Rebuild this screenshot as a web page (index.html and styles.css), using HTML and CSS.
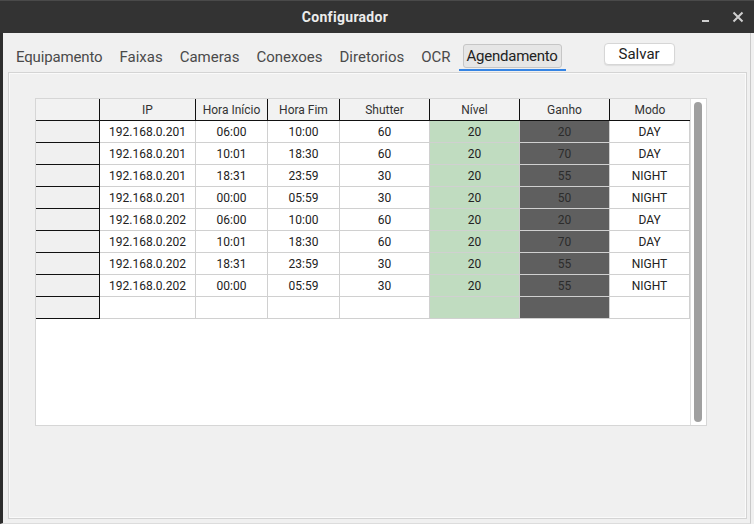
FILE: index.html
```html
<!DOCTYPE html>
<html lang="pt">
<head>
<meta charset="utf-8">
<title>Configurador</title>
<link rel="stylesheet" href="styles.css">
</head>
<body>
<div class="titlebar">
  <div class="title">Configurador</div>
  <div class="wbtns">
    <svg class="wicon" width="16" height="16" viewBox="0 0 16 16"><rect x="4" y="11" width="7" height="2" fill="#cfcfcf"/></svg>
    <svg class="wicon" width="16" height="16" viewBox="0 0 16 16"><path d="M3.5 3.5 L12.5 12.5 M12.5 3.5 L3.5 12.5" stroke="#cfcfcf" stroke-width="2" fill="none"/></svg>
  </div>
</div>
<div class="win">
  <div class="tabbar">
    <span class="tab first">Equipamento</span>
    <span class="tab">Faixas</span>
    <span class="tab">Cameras</span>
    <span class="tab">Conexoes</span>
    <span class="tab">Diretorios</span>
    <span class="tab ocr">OCR</span>
    <span class="tabsel"><span class="tabbox">Agendamento</span></span>
    <button class="btn">Salvar</button>
  </div>
  <div class="panel">
    <div class="frame">
      <div class="grid">
        <div class="h corner"></div><div class="h">IP</div><div class="h">Hora Início</div><div class="h">Hora Fim</div><div class="h">Shutter</div><div class="h">Nível</div><div class="h">Ganho</div><div class="h last">Modo</div>

        <div class="rh"></div><div class="c">192.168.0.201</div><div class="c">06:00</div><div class="c">10:00</div><div class="c">60</div><div class="c g">20</div><div class="c d">20</div><div class="c">DAY</div>
        <div class="rh"></div><div class="c">192.168.0.201</div><div class="c">10:01</div><div class="c">18:30</div><div class="c">60</div><div class="c g">20</div><div class="c d">70</div><div class="c">DAY</div>
        <div class="rh"></div><div class="c">192.168.0.201</div><div class="c">18:31</div><div class="c">23:59</div><div class="c">30</div><div class="c g">20</div><div class="c d">55</div><div class="c">NIGHT</div>
        <div class="rh"></div><div class="c">192.168.0.201</div><div class="c">00:00</div><div class="c">05:59</div><div class="c">30</div><div class="c g">20</div><div class="c d">50</div><div class="c">NIGHT</div>
        <div class="rh"></div><div class="c">192.168.0.202</div><div class="c">06:00</div><div class="c">10:00</div><div class="c">60</div><div class="c g">20</div><div class="c d">20</div><div class="c">DAY</div>
        <div class="rh"></div><div class="c">192.168.0.202</div><div class="c">10:01</div><div class="c">18:30</div><div class="c">60</div><div class="c g">20</div><div class="c d">70</div><div class="c">DAY</div>
        <div class="rh"></div><div class="c">192.168.0.202</div><div class="c">18:31</div><div class="c">23:59</div><div class="c">30</div><div class="c g">20</div><div class="c d">55</div><div class="c">NIGHT</div>
        <div class="rh"></div><div class="c">192.168.0.202</div><div class="c">00:00</div><div class="c">05:59</div><div class="c">30</div><div class="c g">20</div><div class="c d">55</div><div class="c">NIGHT</div>
        <div class="rh"></div><div class="c"></div><div class="c"></div><div class="c"></div><div class="c"></div><div class="c g"></div><div class="c d"></div><div class="c"></div>
      </div>
      <div class="vscroll"><div class="handle"></div></div>
    </div>
  </div>
</div>
</body>
</html>
```

FILE: styles.css
```css
* { box-sizing: border-box; }
html, body { margin: 0; padding: 0; }
body {
  width: 754px;
  height: 524px;
  overflow: hidden;
  background: #f0f0f0;
  font-family: Roboto, "Liberation Sans", sans-serif;
}
.titlebar {
  height: 33px;
  background: #333333;
  border-top: 1px solid #4a4a4a;
  display: flex;
  align-items: center;
}
.title {
  width: 690px;
  text-align: center;
  color: #ececec;
  font-weight: bold;
  font-size: 14px;
  letter-spacing: 0.3px;
  padding-bottom: 1px;
}
.wbtns {
  display: flex;
  gap: 16px;
  padding-left: 8px;
}
.wicon { display: block; }
.win {
  width: 751px;
  height: 491px;
  border-left: 3px solid #2e2e2e;
  border-right: 1px solid #c9c9c9;
  border-bottom: 1px solid #dcdcdc;
  display: flex;
  flex-direction: column;
}
.tabbar {
  height: 39px;
  display: flex;
  align-items: flex-start;
  padding-left: 13px;
}
.tab {
  margin-top: 14px;
  margin-right: 17px;
  line-height: 20px;
  font-size: 15px;
  color: #4a4a4a;
}
.tab.first { letter-spacing: -0.15px; }
.tab.ocr { margin-right: 8px; }
.tabsel {
  margin-top: 11px;
  padding: 0 4px 1px;
  border-bottom: 2px solid #3584e4;
}
.tabbox {
  display: block;
  height: 24px;
  line-height: 22px;
  padding: 0 3px;
  font-size: 15px;
  letter-spacing: -0.25px;
  color: #222;
  background: #e6e6e6;
  border: 1px solid #c6c6c6;
  border-radius: 3px;
}
.btn {
  margin-top: 10px;
  margin-left: 38px;
  width: 71px;
  height: 22px;
  padding: 0;
  background: #ffffff;
  border: 1px solid #d6d6d6;
  border-radius: 4px;
  box-shadow: 0 1px 1px rgba(0,0,0,0.08);
  font-family: Roboto, "Liberation Sans", sans-serif;
  font-size: 15px;
  line-height: 18px;
  color: #222;
}
.panel {
  margin-left: 5px;
  width: 739px;
  height: 447px;
  border: 1px solid #d4d4d4;
  box-shadow: inset 1px 1px 0 #fafafa, inset -1px -1px 0 #fafafa;
  padding: 25px 0 0 26px;
}
.frame {
  width: 672px;
  height: 328px;
  border: 1px solid #d6d6d6;
  background: #ffffff;
  display: flex;
}
.grid {
  display: grid;
  grid-template-columns: 64px 96px 72px 72px 90px 90px 90px 80px;
  grid-auto-rows: 22px;
  align-content: start;
  width: 654px;
  font-size: 12px;
}
.h {
  background: #f2f2f2;
  border-right: 1px solid #111;
  border-bottom: 1px solid #111;
  color: #333;
  text-align: center;
  padding-top: 1px;
  line-height: 20px;
}
.h.last { border-right: none; }
.rh {
  background: #f0f0f0;
  border-right: 1px solid #111;
  border-bottom: 1px solid #111;
}
.c {
  border-right: 1px solid #d0d0d0;
  border-bottom: 1px solid #d0d0d0;
  text-align: center;
  padding-top: 1px;
  line-height: 20px;
  color: #222;
}
.c.g { background: #c0dcc0; }
.c.d { background: #5f5f5f; color: #2c2c2c; }
.vscroll {
  width: 16px;
  border-left: 1px solid #e0e0e0;
  padding: 3px 0 3px 3px;
}
.handle {
  width: 8px;
  height: 100%;
  background: #a0a0a0;
  border-radius: 4px;
}
```
